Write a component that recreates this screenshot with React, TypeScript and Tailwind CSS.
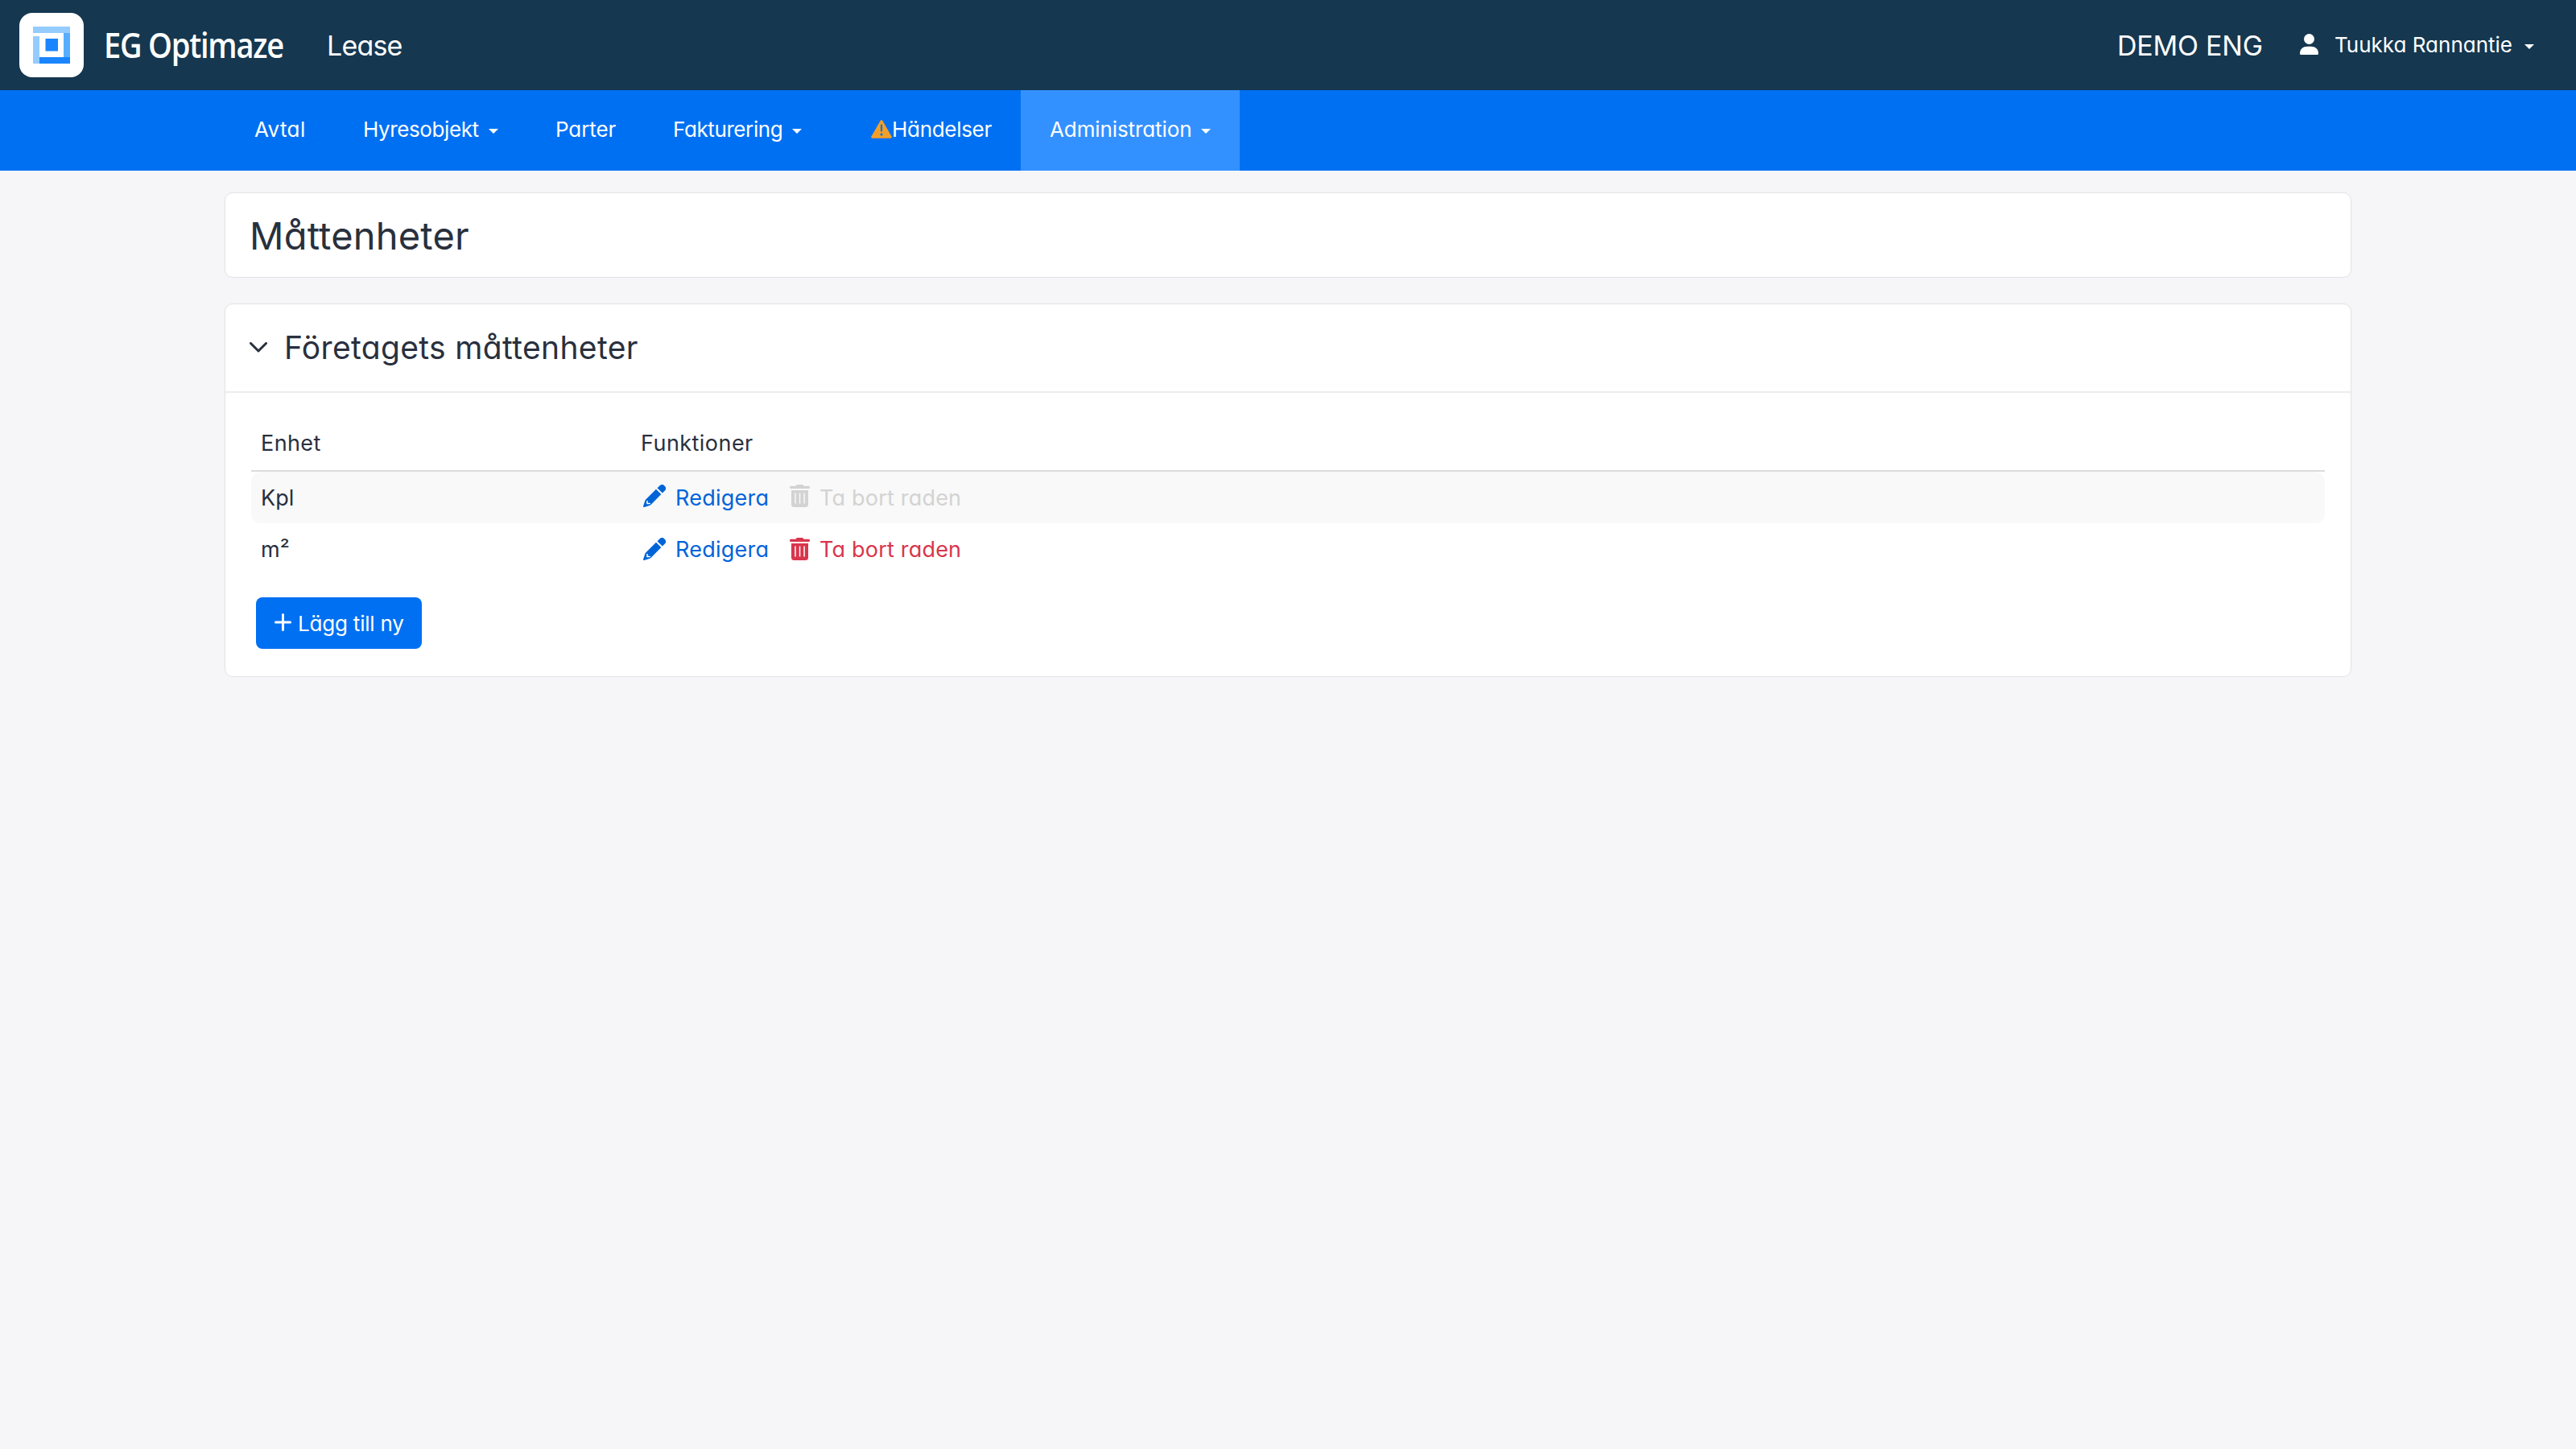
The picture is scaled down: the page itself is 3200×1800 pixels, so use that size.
import React from "react";

interface NavLink {
  label: string;
  className: string;
  caret?: boolean;
  warning?: boolean;
}

const navLinks: NavLink[] = [
  { label: "Avtal", className: "w-[135px] tracking-[0.4px]" },
  { label: "Hyresobjekt", className: "w-[239px] tracking-[-0.4px]", caret: true },
  { label: "Parter", className: "w-[146px] tracking-[-0.1px]" },
  { label: "Fakturering", className: "w-[243px] tracking-[-0.4px]", caret: true },
  { label: "Händelser", className: "w-[225px] tracking-[-0.3px]", warning: true },
  { label: "Administration", className: "w-[272px] bg-[#3391ff] tracking-[-0.1px]", caret: true },
];

const units = [
  { name: "Kpl", removable: false },
  { name: "m²", removable: true },
];

function Caret() {
  return (
    <svg width="12" height="6" viewBox="0 0 12 6" fill="currentColor" className="ml-3 mt-1 shrink-0">
      <path d="M0 0h12L6 6z" />
    </svg>
  );
}

function Logo() {
  return (
    <svg width="80" height="80" viewBox="0 0 80 80" className="shrink-0">
      <rect width="80" height="80" rx="16" fill="#fff" />
      <path d="M17 17h46v8H17z" fill="#94ccff" />
      <path d="M17 29h8v34h-8z" fill="#94ccff" />
      <path d="M55 25h8v30h-8z" fill="#57aeff" />
      <path d="M25 55h38v8H25z" fill="#1a85ff" />
      <path d="M32.500 32h15.500v15.500H32.500z" fill="#1a85ff" />
    </svg>
  );
}

function UserIcon() {
  return (
    <svg width="23" height="26" viewBox="0 0 23 26" fill="currentColor" className="mb-0.5 ml-[46px] shrink-0">
      <circle cx="11.500" cy="6.500" r="6.500" />
      <path d="M1.500 26A1.500 1.500 0 0 1 0 24.500C0 19 4 15.700 9 15.700h5c5 0 9 3.300 9 8.800A1.500 1.500 0 0 1 21.500 26z" />
    </svg>
  );
}

function WarningIcon() {
  return (
    <svg width="26" height="23" viewBox="0 0 26 23" className="ml-[3px] shrink-0">
      <path d="M13 1.800 24.200 21.200H1.800z" fill="#f29f29" stroke="#f29f29" strokeWidth="3.200" strokeLinejoin="round" />
      <path d="M13 6.500v7" stroke="#0070f2" strokeWidth="2.200" strokeLinecap="round" />
      <circle cx="13" cy="18" r="1.600" fill="#0070f2" />
    </svg>
  );
}

function PencilIcon() {
  return (
    <svg width="28" height="28" viewBox="0 0 28 28" className="shrink-0">
      <path d="M17.500 4.300 20.600 1.200a4 4 0 0 1 5.600 0l.7.700a4 4 0 0 1 0 5.600l-3.100 3.100z" fill="currentColor" />
      <path d="M16 5.800 22.300 12.100 9.500 24.900a4 4 0 0 1-1.700 1L1.300 27.900A1 1 0 0 1 .1 26.700L2.200 20.300a4 4 0 0 1 1-1.700z" fill="currentColor" />
      <path d="M5 20.600v3h3.200" fill="none" stroke="#fff" strokeWidth="1.500" strokeLinecap="round" />
    </svg>
  );
}

function TrashIcon() {
  return (
    <svg width="25" height="28" viewBox="0 0 25 28" fill="currentColor" className="ml-[27px] shrink-0">
      <path d="M1.500 1.800h6L8.800 0h7.400l1.300 1.800h6a1.600 1.600 0 0 1 0 3.200h-22a1.600 1.600 0 0 1 0-3.200z" />
      <path
        fillRule="evenodd"
        d="M2 7h21v17.500a3.500 3.500 0 0 1-3.500 3.500h-14A3.500 3.500 0 0 1 2 24.500zM6.200 10.500v13h1.500v-13zM11.800 10.500v13h1.500v-13zM17.300 10.500v13h1.500v-13z"
      />
    </svg>
  );
}

export default function App() {
  return (
    <div className="min-h-[1800px] bg-[#f6f6f9] font-['Inter','Liberation_Sans',sans-serif] text-[#29303d] [font-feature-settings:'cv11']">
      {/* Product header */}
      <header className="flex h-28 items-center bg-[#153750] pl-6 pr-[52px] text-white">
        <Logo />
        <span className="mb-0.5 ml-[25px] w-[226px] origin-left scale-x-[0.885] whitespace-nowrap font-['Open_Sans',sans-serif] text-[43px] font-semibold leading-none tracking-[-1.4px]">EG Optimaze</span>
        <span className="ml-[51px] text-[34px] tracking-[-0.8px]">Lease</span>
        <span className="ml-auto whitespace-nowrap text-[34px] tracking-[-0.2px]">DEMO ENG</span>
        <UserIcon />
        <span className="mb-0.5 ml-5 mr-[3px] whitespace-nowrap text-[26px]">Tuukka Rannantie</span>
        <Caret />
      </header>

      {/* Main navigation */}
      <nav className="flex h-[100px] bg-[#0070f2] pl-[280px] text-[26px] text-white">
        {navLinks.map((link) => (
          <a key={link.label} className={`flex shrink-0 items-center whitespace-nowrap pb-[3px] pl-9 ${link.className}`}>
            {link.warning && <WarningIcon />}
            <span>{link.label}</span>
            {link.caret && <Caret />}
          </a>
        ))}
      </nav>

      <main className="px-[279px] pt-[27px]">
        <section className="flex h-[106px] items-center rounded-[10px] border border-[#e1e2e5] bg-white pl-[30px]">
          <h1 className="pt-0.5 text-[47px] tracking-[0.2px]">Måttenheter</h1>
        </section>

        <section className="mt-8 h-[464px] rounded-[10px] border border-[#e1e2e5] bg-white">
          <div className="flex h-[110px] items-center border-b-2 border-[#ededee] pl-[30px]">
            <svg width="22" height="13" viewBox="0 0 22 13" fill="none" stroke="currentColor" strokeWidth="3" strokeLinecap="round" strokeLinejoin="round" className="mb-0.5">
              <path d="m1.500 1.500 9.500 9.500 9.500-9.500" />
            </svg>
            <h2 className="ml-[21px] text-[39px] tracking-[0.35px]">Företagets måttenheter</h2>
          </div>

          <div className="px-8 pt-9 text-[27px]">
            <div className="flex h-[62px] items-center border-b-2 border-[#dcdcdc] pb-[5px] pl-3 font-[440]">
              <span className="w-[472px] tracking-[0.4px]">Enhet</span>
              <span className="tracking-[0.45px]">Funktioner</span>
            </div>
            {units.map((unit) => (
              <div key={unit.name} className="flex h-16 items-center rounded-xl pl-3 odd:bg-white even:bg-[#f9f9f9]">
                <span className="w-[475px] pt-0.5">{unit.name}</span>
                <span className={unit.removable ? "text-[#0064d9]" : "pb-1 text-[#0064d9]"}>
                  <PencilIcon />
                </span>
                <span className="ml-3 w-[115px] pt-0.5 tracking-[0.25px] text-[#0064d9]">Redigera</span>
                <span className={unit.removable ? "text-[#d9364c]" : "pb-1 text-[#d3d3d3]"}>
                  <TrashIcon />
                </span>
                <span className={`ml-3 pt-0.5 tracking-[0.2px] ${unit.removable ? "text-[#d9364c]" : "text-[#d3d3d3]"}`}>Ta bort raden</span>
              </div>
            ))}
            <button className="ml-1.5 mt-7 flex h-16 w-[206px] items-center rounded-lg bg-[#0070f2] pl-[23px] text-[26px] text-white">
              <svg width="21" height="22" viewBox="0 0 21 22" stroke="currentColor" strokeWidth="3" strokeLinecap="round" className="mb-0.5 shrink-0">
                <path d="M10.500 1.500v19M1.500 11h18" />
              </svg>
              <span className="ml-2 whitespace-nowrap tracking-[-0.2px]">Lägg till ny</span>
            </button>
          </div>
        </section>
      </main>
    </div>
  );
}
